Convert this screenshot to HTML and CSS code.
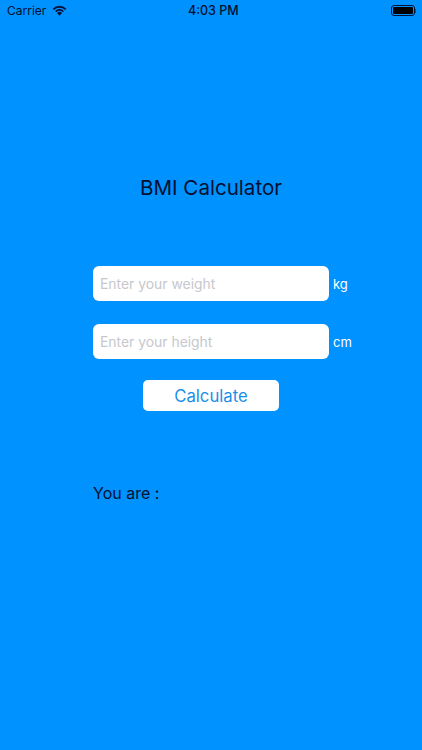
FILE: index.html
```html
<!DOCTYPE html>
<html>
<head>
<meta name="viewport" content="width=device-width, initial-scale=1">
<link rel="stylesheet" href="styles.css">
</head>
<body>

<div class="status-bar">
  <div class="status-left">
    <span>Carrier</span>
    <svg class="wifi" viewBox="0 0 16 12" width="15" height="11">
      <path d="M8 11.800 5.300 8.800a3.800 3.800 0 0 1 5.400 0z" fill="#04123a"/>
      <path d="M1.300 4.700a9.500 9.500 0 0 1 13.400 0" fill="none" stroke="#04123a" stroke-width="2.100"/>
      <path d="M3.800 7.200a5.900 5.900 0 0 1 8.400 0" fill="none" stroke="#04123a" stroke-width="1.900"/>
    </svg>
  </div>
  <div class="status-time">4:03 PM</div>
  <div class="status-right">
    <div class="battery"><div class="battery-fill"></div></div>
    <div class="battery-cap"></div>
  </div>
</div>

<h1 id="title">BMI Calculator</h1>

<form class="form">
  <div class="row">
    <input type="text" id="weight" name="weight" placeholder="Enter your weight">
    <label for="weight">kg</label>
  </div>
  <div class="row">
    <input type="text" id="height" name="height" placeholder="Enter your height">
    <label for="height">cm</label>
  </div>
  <div class="calculate">Calculate</div>
</form>

<p class="result">You are :</p>

</body>
</html>
```

FILE: styles.css
```css
* {
  box-sizing: border-box;
}

html, body {
  height: 100%;
}

body {
  margin: 0;
  background-color: #0092ff;
  font-family: Inter, "Liberation Sans", sans-serif;
  color: #021030;
  overflow: hidden;
}

.status-bar {
  display: flex;
  align-items: center;
  justify-content: space-between;
  height: 21px;
  padding: 0 6px 0 7px;
  font-size: 12px;
  position: relative;
}

.status-left {
  display: flex;
  align-items: center;
  gap: 6px;
}

.status-time {
  position: absolute;
  left: 188px;
  top: 3px;
  font-weight: 500;
  font-size: 12.500px;
}

.status-right {
  display: flex;
  align-items: center;
}

.battery {
  width: 24px;
  height: 11px;
  border: 1px solid #04123a;
  border-radius: 3px;
  padding: 1px;
}

.battery-fill {
  height: 100%;
  background-color: #000;
  border-radius: 1px;
}

.battery-cap {
  width: 1px;
  height: 4px;
  background-color: #04123a;
  opacity: 0.5;
}

h1 {
  margin: 153px 0 0;
  height: 28px;
  font-size: 20.600px;
  line-height: 28px;
  font-weight: 400;
  text-align: center;
}

.form {
  margin: 64px 0 0 93px;
  width: 260px;
}

.row {
  display: flex;
  align-items: center;
  margin-bottom: 23px;
}

input[type=text] {
  width: 236px;
  height: 35px;
  padding: 0 7px;
  border: none;
  border-radius: 6px;
  background-color: #fff;
  font-family: inherit;
  font-size: 13.900px;
}

input::placeholder {
  color: #c7c7cd;
  opacity: 1;
}

label {
  margin-left: 4px;
  color: #fff;
  font-size: 13px;
}

.calculate {
  width: 136px;
  height: 31px;
  margin: -2px 0 0 50px;
  border-radius: 5px;
  background-color: #fff;
  color: #1a8fe8;
  font-size: 16.700px;
  line-height: 32px;
  text-align: center;
  cursor: pointer;
}

.result {
  margin: 71px 0 0 93px;
  font-size: 16px;
  line-height: 22px;
}
```
